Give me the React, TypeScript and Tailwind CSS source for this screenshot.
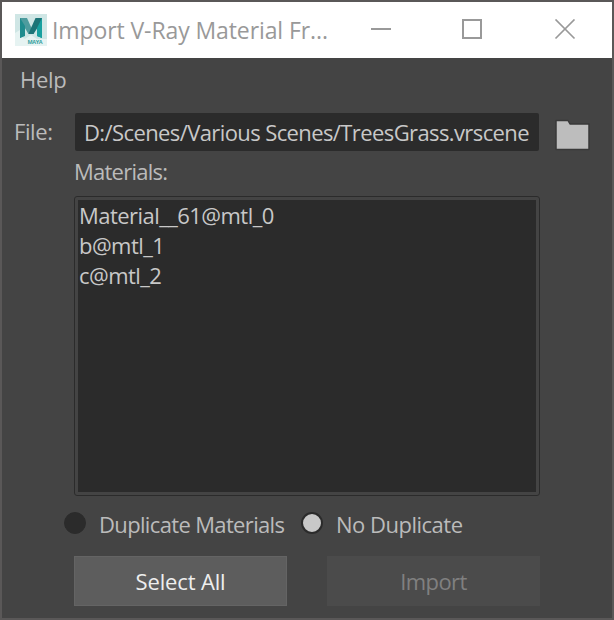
import { useState } from 'react'
import clsx from 'clsx'

const MATERIALS = ['Material__61@mtl_0', 'b@mtl_1', 'c@mtl_2']

const MODES = [
  { id: 'duplicate', label: 'Duplicate Materials', className: 'w-[237px] tracking-[-0.65px]' },
  { id: 'none', label: 'No Duplicate', className: 'tracking-[-0.5px]' },
]

function MayaIcon() {
  return (
    <svg width="32" height="32" viewBox="0 0 32 32" className="shrink-0">
      <rect width="32" height="32" fill="#cfe6e5" />
      <path d="M0 19L5 16V22L10 25L16 21L22 25H32V32H0Z" fill="#e6f3f2" />
      <path d="M5 4H10V21L5 24Z" fill="#2a9697" />
      <path d="M22 4H27V24L22 22Z" fill="#12898a" />
      <path d="M5 4H12L16.500 14L19 20H13.500L8 11Z" fill="#4d9c9e" />
      <path d="M27 4H20.500L16 14L13.500 20H18.500L23 13Z" fill="#1c7477" />
      <path d="M5 4L10 12V22L5 24Z" fill="#1f8c8e" />
      <path d="M27 4L22 14V22L27 24Z" fill="#17a09f" />
      <text x="12.5" y="30" fontSize="5.500" fontWeight="700" fontFamily="Open Sans, sans-serif" textLength="15" fill="#35a09f">MAYA</text>
    </svg>
  )
}

function TitleBar() {
  return (
    <div className="h-14 shrink-0 bg-white flex items-center pl-[13px] text-[#999]">
      <MayaIcon />
      <span className="w-[323px] pl-[5px] text-[23px] leading-[30px] tracking-[-0.1px] whitespace-nowrap">Import V-Ray Material Fr...</span>
      <svg width="206" height="22" viewBox="0 0 206 22" fill="none" stroke="currentColor" strokeWidth="2">
        <path d="M1 10H21" />
        <rect x="93" y="1" width="18" height="18" />
        <path d="M185.500 0.500L204.500 19.500M204.500 0.500L185.500 19.500" strokeWidth="1.700" />
      </svg>
    </div>
  )
}

function FolderIcon() {
  return (
    <svg width="36" height="32" viewBox="0 0 36 32">
      <path d="M1 1.500H13L15 5H34V30.500H1Z" fill="#bdbdbd" stroke="#393939" strokeWidth="1.500" strokeLinejoin="round" />
    </svg>
  )
}

export default function App() {
  const [mode, setMode] = useState('none')

  return (
    <div className="w-[614px] h-[620px] border-2 border-[#5a5858] bg-[#444] flex flex-col overflow-hidden font-['Open_Sans',sans-serif] text-[22px] leading-[30px] text-[#bbb]">
      <TitleBar />

      <div className="h-[55px] pl-[18px] pt-[6px] tracking-[-0.3px]">Help</div>

      <div className="h-[38px] shrink-0 flex items-center">
        <label className="w-[73px] pl-3 pb-[2px] tracking-[-0.4px]">File:</label>
        <input
          readOnly
          value="D:/Scenes/Various Scenes/TreesGrass.vrscene"
          className="w-[464px] h-[38px] pl-[9px] rounded-[2px] bg-[#2b2b2b] text-[#c8c8c8] outline-none pb-px tracking-[-0.6px]"
        />
        <button className="ml-4 mt-[5px]">
          <FolderIcon />
        </button>
      </div>

      <div className="h-[45px] shrink-0 pl-[72px] pt-[5px] tracking-[-0.75px]">Materials:</div>

      <div className="ml-[72px] w-[466px] h-[300px] shrink-0 rounded-[3px] border border-[#2b2b2b] p-[3px]">
        <ul className="h-full bg-[#2b2b2b] text-[#c8c8c8] pl-[1px] tracking-[-0.55px]">
          {MATERIALS.map((name) => (
            <li key={name}>{name}</li>
          ))}
        </ul>
      </div>

      <div className="h-[60px] shrink-0 pl-[62px] flex pt-[13px]">
        {MODES.map(({ id, label, className }) => (
          <button key={id} onClick={() => setMode(id)} className={clsx('flex h-[30px] text-left whitespace-nowrap', className)}>
            <span
              className={clsx(
                'mr-[13px] mt-[3px] size-[22px] shrink-0 rounded-full border-[#2b2b2b]',
                mode === id ? 'bg-[#c8c8c8] border-2' : 'bg-[#2b2b2b] border'
              )}
            />
            {label}
          </button>
        ))}
      </div>

      <div className="h-[50px] shrink-0 pl-[72px] flex gap-10">
        <button className="w-[213px] border border-[#646464] bg-[#5d5d5d] text-[#eee] tracking-[-0.15px]">Select All</button>
        <button disabled className="w-[213px] bg-[#4b4b4b] text-[#808080] tracking-[-0.6px]">Import</button>
      </div>
    </div>
  )
}
